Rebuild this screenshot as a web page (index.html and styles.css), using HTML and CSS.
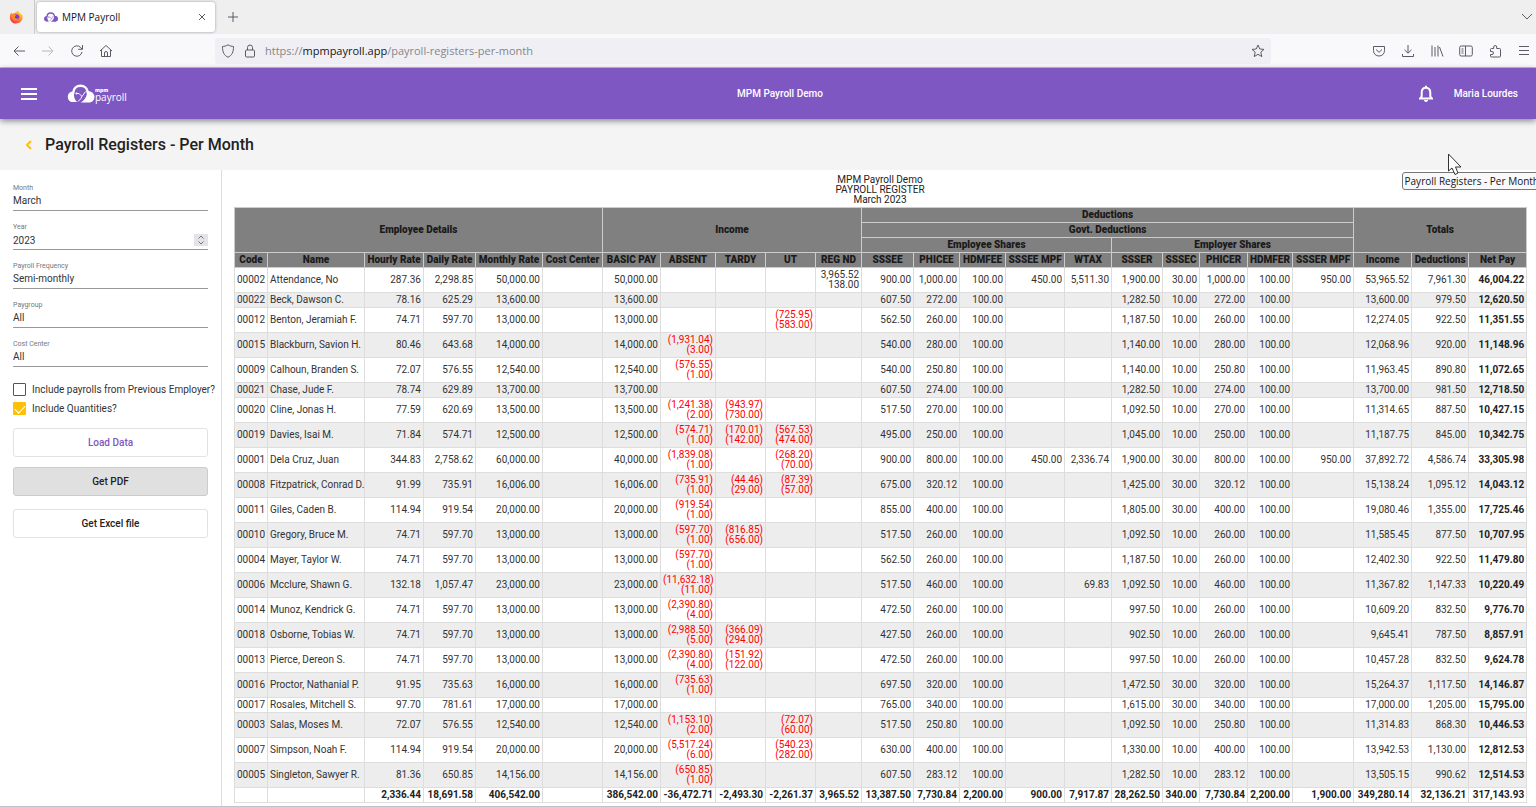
FILE: index.html
```html
<!DOCTYPE html>
<html lang="en">
<head>
<meta charset="utf-8">
<title>MPM Payroll</title>
<link rel="stylesheet" href="styles.css">
</head>
<body>
<svg class="defs" width="0" height="0" aria-hidden="true">
  <symbol id="cloud" viewBox="0 0 54 38">
    <path d="M12 33C6 33 3 30 3 25.500C3 20.500 7 17.500 11.500 17.500C12 9 18 3.500 26 3.500C34 3.500 39.500 9 40.500 16.500C47 16.500 51.500 21 51.500 26C51.500 31 47.500 34 42.500 34" fill="none" stroke="currentColor" stroke-width="5"/>
    <path d="M39 15C49 16 53 21 53 27C53 33 48 37 42 37H26C34 33 39 26 39 15Z" fill="currentColor"/>
    <path d="M2 27C2 20 8 16 13 18C12 24 14 31 19 36H10C5 36 2 32 2 27Z" fill="currentColor"/>
    <path d="M18 19H23L29 25L36 15M28 25L27 29L21 35" fill="none" stroke="currentColor" stroke-width="2"/>
    <circle cx="18" cy="19" r="2" fill="currentColor"/>
  </symbol>
</svg>

<header class="browser">
  <div class="tabs">
    <div class="firefox">
      <svg width="14" height="14" viewBox="0 0 28 28">
        <defs>
          <linearGradient id="flame" x1="0.8" y1="0" x2="0.2" y2="1"><stop offset="0" stop-color="#ffe14a"/><stop offset="0.45" stop-color="#ff9526"/><stop offset="1" stop-color="#f4275c"/></linearGradient>
        </defs>
        <path d="M3 8L5 5L7 8C9 6 11 5 13 5L18 1C19 4 23 6 24 9L26 8C30 19 23 27 14 27C5 27-1 18 3 8Z" fill="url(#flame)"/>
        <circle cx="14.500" cy="14.500" r="6" fill="#7a3bd0"/>
        <path d="M3 9C8 7 12 9 15 12C12 12 11 13 12 15C13 18 17 18 20 16C19 21 13 23 9 20C6 18 5 13 3 9Z" fill="#ff8a1f"/>
      </svg>
    </div>
    <div class="tab">
      <svg class="tab-icon" width="14" height="10"><use href="#cloud"/></svg>
      <span class="tab-title">MPM Payroll</span>
      <button class="chrome-btn" aria-label="Close tab"><svg width="8" height="8" viewBox="0 0 8 8"><path d="M1 1L7 7M7 1L1 7"/></svg></button>
    </div>
    <button class="chrome-btn new-tab" aria-label="New tab"><svg width="10" height="10" viewBox="0 0 10 10"><path d="M5 0V10M0 5H10"/></svg></button>
    <button class="chrome-btn list-tabs" aria-label="List all tabs"><svg width="12" height="8" viewBox="0 0 12 8"><path d="M1 1L6 6L11 1"/></svg></button>
  </div>
  <div class="toolbar">
    <nav class="nav-buttons" aria-label="History">
      <button class="chrome-btn" aria-label="Back"><svg width="14" height="14" viewBox="0 0 14 14"><path d="M13 7H2M6.500 2.500L2 7L6.500 11.500"/></svg></button>
      <button class="chrome-btn" aria-label="Forward" disabled><svg width="14" height="14" viewBox="0 0 14 14"><path d="M1 7H12M7.500 2.500L12 7L7.500 11.500"/></svg></button>
      <button class="chrome-btn" aria-label="Reload"><svg width="14" height="14" viewBox="0 0 14 14"><path d="M12 8A5.200 5.200 0 1 1 10.500 3.300L12 5M12.500 1V5.300H8.200"/></svg></button>
      <button class="chrome-btn" aria-label="Home"><svg width="14" height="14" viewBox="0 0 14 14"><path d="M1 7L7 1.500L13 7M2.500 6V12.500H11.500V6M5.500 12.500V9A1.500 1.500 0 0 1 8.500 9V12.500"/></svg></button>
    </nav>
    <div class="address">
      <svg width="14" height="14" viewBox="0 0 14 14"><path d="M7 .8C9 2 11 2.500 12.500 2.500C12.500 8 11 11.500 7 13.200C3 11.500 1.500 8 1.500 2.500C3 2.500 5 2 7 .8Z"/></svg>
      <svg width="14" height="14" viewBox="0 0 14 14"><rect x="2.500" y="6" width="9" height="7" rx="1"/><path d="M4.500 6V3.500A2.500 2.500 0 0 1 9.500 3.500V6"/></svg>
      <div class="url" role="textbox" aria-label="Address" contenteditable="true" spellcheck="false">https://<b>mpmpayroll.app</b>/payroll-registers-per-month</div>
      <button class="chrome-btn" aria-label="Bookmark"><svg width="14" height="14" viewBox="0 0 14 14"><path d="M7 1L8.800 5L13 5.400L9.800 8.200L10.800 12.600L7 10.300L3.200 12.600L4.200 8.200L1 5.400L5.200 5Z"/></svg></button>
    </div>
    <div class="tools">
      <button class="chrome-btn" aria-label="Pocket"><svg width="14" height="14" viewBox="0 0 14 14"><path d="M1.500 2.500H12.500V6.500C12.500 10 10 12 7 12S1.500 10 1.500 6.500ZM4 5.500L7 8.300L10 5.500"/></svg></button>
      <button class="chrome-btn" aria-label="Downloads"><svg width="14" height="14" viewBox="0 0 14 14"><path d="M7 1V9M3.500 5.800L7 9.200L10.500 5.800M1.500 10V12.500H12.500V10"/></svg></button>
      <button class="chrome-btn" aria-label="Library"><svg width="14" height="14" viewBox="0 0 14 14"><path d="M2 1.500V12.500M5 3V12.500M8 1.500V12.500M9.500 3L13 12.500"/></svg></button>
      <button class="chrome-btn" aria-label="Sidebars"><svg width="14" height="14" viewBox="0 0 14 14"><rect x=".7" y="2" width="12.600" height="10" rx="1.500"/><path d="M6.500 2V12M2.500 5H4.500M2.500 7H4.500M2.500 9H4.500"/></svg></button>
      <button class="chrome-btn" aria-label="Extensions"><svg width="14" height="14" viewBox="0 0 14 14"><path d="M2.500 7.500V5.500A1 1 0 0 1 3.500 4.500H5.700V3A1.500 1.500 0 0 1 8.700 3V4.500H11.500A1 1 0 0 1 12.500 5.500V12A1 1 0 0 1 11.500 13H3.500A1 1 0 0 1 2.500 12V10.500H4A1.500 1.500 0 0 0 4 7.500Z"/></svg></button>
      <button class="chrome-btn" aria-label="Menu"><svg width="14" height="14" viewBox="0 0 14 14"><path d="M2 2.500H12M2 6.500H12M2 10.500H12"/></svg></button>
    </div>
  </div>
</header>

<div class="appbar">
  <button class="menu-btn" aria-label="Open menu"><svg width="16" height="12" viewBox="0 0 16 12"><path d="M0 1H16M0 6H16M0 11H16"/></svg></button>
  <a class="logo" href="#" aria-label="MPM Payroll home">
    <svg width="62" height="22" viewBox="0 0 62 22">
      <use href="#cloud" x="0" y="1" width="28" height="19"/>
      <text class="logo-mpm" x="28" y="9">mpm</text>
      <text class="logo-name" x="28" y="18">payroll</text>
    </svg>
  </a>
  <span class="company">MPM Payroll Demo</span>
  <div class="account">
    <button class="bell" aria-label="Notifications"><svg width="14" height="18" viewBox="0 0 14 18"><path class="line" d="M1 13.500H13L11.300 11.500V7.500C11.300 4.500 9.500 2.800 7 2.800S2.700 4.500 2.700 7.500V11.500Z"/><path class="solid" d="M6 .8H8V3H6ZM5 15H9C9 17.500 5 17.500 5 15Z"/></svg></button>
    <a class="user" href="#">Maria Lourdes</a>
  </div>
</div>

<div class="titlebar">
  <a class="back" href="#" aria-label="Back"><svg width="8" height="10" viewBox="0 0 8 10"><path d="M6 1L2 5L6 9"/></svg></a>
  <h1>Payroll Registers - Per Month</h1>
  <div class="tooltip" role="tooltip">Payroll Registers - Per Month</div>
  <svg class="cursor" width="16" height="24" viewBox="0 0 16 24"><path d="M1.500 1V18L5 15L8 21.500L11 20L8.500 14H14Z"/></svg>
</div>

<div class="content">
  <form class="filters">
    <div class="field"><label for="month">Month</label><select id="month"><option>March</option></select></div>
    <div class="field"><label for="year">Year</label>
      <div class="number"><input id="year" type="number" value="2023"><span class="spin"><svg width="8" height="10" viewBox="0 0 8 10"><path d="M1.500 3.500L4 1L6.500 3.500M1.500 6.500L4 9L6.500 6.500"/></svg></span></div>
    </div>
    <div class="field"><label for="freq">Payroll Frequency</label><select id="freq"><option>Semi-monthly</option></select></div>
    <div class="field"><label for="group">Paygroup</label><select id="group"><option>All</option></select></div>
    <div class="field"><label for="center">Cost Center</label><select id="center"><option>All</option></select></div>
    <div class="checks">
      <label><input type="checkbox">Include payrolls from Previous Employer?</label>
      <label><input type="checkbox" checked>Include Quantities?</label>
    </div>
    <div class="actions">
      <button type="button" class="primary">Load Data</button>
      <button type="button" class="active">Get PDF</button>
      <button type="button" class="excel">Get Excel file</button>
    </div>
  </form>
  <main class="report">
    <div class="heading">MPM Payroll Demo<br>PAYROLL REGISTER<br>March 2023</div>
    <table>
      <colgroup id="cols"></colgroup>
      <thead>
        <tr><th colspan="6" rowspan="3">Employee Details</th><th colspan="5" rowspan="3">Income</th><th colspan="10">Deductions</th><th colspan="3" rowspan="3">Totals</th></tr>
        <tr><th colspan="10">Govt. Deductions</th></tr>
        <tr><th colspan="5">Employee Shares</th><th colspan="5">Employer Shares</th></tr>
        <tr id="names"></tr>
      </thead>
      <tbody id="rows"></tbody>
      <tfoot><tr id="totals"></tr></tfoot>
    </table>
  </main>
</div>
<script src="register.js"></script>
</body>
</html>
```

FILE: styles.css
```css
* { box-sizing: border-box; }

body {
  margin: 0;
  min-height: 100vh;
  display: flex;
  flex-direction: column;
  overflow: hidden;
  background: #fff;
  color: #333;
  font: 10px/10px Roboto, sans-serif;
}

button, input, select { font: inherit; color: inherit; }
button { padding: 0; border: 0; background: none; }
a { color: inherit; text-decoration: none; }
svg { display: block; flex: none; }
.defs { position: absolute; }

/* Browser window */
.browser {
  border-bottom: 1px solid #c3c0cb;
  background: #f9f9fb;
  font-family: "Open Sans", sans-serif;
}
.browser svg { fill: none; stroke: #5b5b66; stroke-width: 1; }
.browser .firefox svg, .browser .tab-icon { stroke: none; }
.tabs {
  display: flex;
  align-items: center;
  height: 34px;
  padding-right: 3px;
  background: #efefef;
}
.firefox {
  display: flex;
  align-items: center;
  height: 34px;
  width: 35px;
  padding-left: 9px;
  border-right: 1px solid #ccc;
}
.tab {
  display: flex;
  align-items: center;
  width: 178px;
  height: 30px;
  margin: 0 13px 0 2px;
  padding: 0 9px 0 7px;
  border-radius: 3px;
  background: #fff;
  box-shadow: 0 0 3px #999;
}
.tab-icon { color: #7e57c2; }
.tab-title { flex: 1; margin-left: 4px; color: #15141a; }
.list-tabs { margin-left: auto; }
.chrome-btn { display: grid; place-items: center; }
.chrome-btn:disabled { opacity: .4; }
.toolbar { display: flex; align-items: center; height: 33px; padding-right: 5px; }
.nav-buttons { display: flex; gap: 15px; padding-left: 12px; width: 215px; }
.address {
  flex: 1;
  display: flex;
  align-items: center;
  gap: 8px;
  height: 26px;
  padding: 0 6px;
  border-radius: 3px;
  background: #f0f0f4;
}
.url { flex: 1; color: #85858e; font-size: 11px; line-height: 16px; }
.url b { color: #15141a; font-weight: 400; }
.tools { display: flex; gap: 15px; margin-left: 101px; }

/* Application bar */
.appbar {
  position: relative;
  z-index: 1;
  display: grid;
  grid-template-columns: 1fr auto 1fr;
  grid-template-areas: "left mid right";
  align-items: center;
  height: 51px;
  padding: 0 0 0 24px;
  background: #7e57c2;
  box-shadow: 0 2px 6px rgba(0, 0, 0, .45);
  color: #fff;
  font-weight: 500;
}
.menu-btn { grid-area: left; justify-self: start; margin-left: -3px; }
.menu-btn path { stroke: #fff; stroke-width: 2; }
.logo { grid-area: left; justify-self: start; margin-left: 43px; }
.logo text { fill: #fff; font-family: "Open Sans", sans-serif; }
.logo-mpm { font-size: 5px; font-weight: 800; }
.logo-name { font-size: 10px; font-weight: 400; }
.company { grid-area: mid; }
.account { grid-area: right; justify-self: end; display: flex; align-items: center; gap: 21px; padding-right: 18px; }
.bell .line { fill: none; stroke: #fff; stroke-width: 2; }
.bell .solid { fill: #fff; }

/* Page title */
.titlebar {
  position: relative;
  display: flex;
  align-items: center;
  gap: 12px;
  height: 51px;
  padding-left: 25px;
  background: #f4f4f4;
}
.back path { fill: none; stroke: #ffc107; stroke-width: 2; }
h1 { margin: 0; color: #222; font-size: 16px; line-height: 20px; font-weight: 500; }
.tooltip {
  position: absolute;
  z-index: 2;
  top: 53px;
  right: -6px;
  padding: 0 2px;
  border: 1px solid #777;
  border-radius: 3px;
  background: #f9f9fb;
  color: #15141a;
  font: 10px/16px "Open Sans", sans-serif;
  white-space: nowrap;
}
.cursor { position: absolute; z-index: 3; top: 34px; right: 73px; fill: #fff; stroke: #333; }

/* Filters */
.content { flex: 1; display: flex; border-bottom: 1px solid #c3c0cb; }
.filters {
  flex: none;
  width: 222px;
  padding: 2px 13px 0;
  border-right: 1px solid #ddd;
}
.field {
  display: flex;
  flex-direction: column;
  justify-content: flex-end;
  height: 39px;
  border-bottom: 1px solid #999;
}
.field label { color: #777; font-size: 7px; line-height: 8px; }
.field select, .field input {
  appearance: none;
  width: 100%;
  height: 18px;
  padding: 0;
  border: 0;
  background: none;
}
.number { display: flex; align-items: center; }
.number input { appearance: textfield; }
.number input::-webkit-inner-spin-button { appearance: none; }
.spin { padding: 1px 3px; background: #e4e3ea; }
.spin path { fill: none; stroke: #777; }
.checks { display: grid; gap: 6px; padding-top: 16px; }
.checks label { display: flex; align-items: center; gap: 6px; white-space: nowrap; line-height: 13px; }
.checks input {
  appearance: none;
  flex: none;
  width: 13px;
  height: 13px;
  margin: 0;
  border: 1px solid #555;
  border-radius: 1px;
}
.checks input:checked { border: 0; background: #ffc107; }
.checks input:checked::after {
  content: "";
  display: block;
  width: 9px;
  height: 5px;
  margin: 3px 2px;
  border: solid #fff;
  border-width: 0 0 1px 1px;
  transform: rotate(-45deg);
}
.actions { display: grid; gap: 10px; padding-top: 13px; }
.actions button {
  height: 29px;
  border: 1px solid #e2e2e2;
  border-radius: 3px;
  color: #222;
  font-weight: 500;
}
.actions .primary { color: #7e57c2; }
.actions .active { border-color: #ccc; background: #e0e0e0; }
.actions .excel { margin-top: 3px; }

/* Register */
.report { flex: 1; min-width: 0; padding: 5px 10px 3px 12px; }
.heading { margin-bottom: 2px; color: #222; text-align: center; }
table { width: 100%; table-layout: fixed; border-collapse: collapse; }
th, td { padding: 2px; border: 1px solid #ddd; white-space: nowrap; }
th { border-color: #ccc; background: #808080; color: #1a1a1a; font-weight: 900; padding-inline: 0; }
td { text-align: right; }
td:nth-child(-n+2) { text-align: left; }
tbody tr:nth-child(even) { background: #ededed; }
tbody td:last-child, tfoot td { color: #222; font-weight: 700; }
.minus { color: #f00; }
```

FILE: register.js
```js
const columns = [
  ['Code', 33], ['Name', 97], ['Hourly Rate', 59], ['Daily Rate', 52], ['Monthly Rate', 67], ['Cost Center', 60],
  ['BASIC PAY', 58], ['ABSENT', 55], ['TARDY', 50], ['UT', 50], ['REG ND', 46],
  ['SSSEE', 52], ['PHICEE', 46], ['HDMFEE', 46], ['SSSEE MPF', 59], ['WTAX', 47],
  ['SSSER', 51], ['SSSEC', 37], ['PHICER', 48], ['HDMFER', 45], ['SSSER MPF', 61],
  ['Income', 58], ['Deductions', 57], ['Net Pay', 58]
];

// A slash separates an amount from its quantity.
const employees = `
00002|Attendance, No|287.36|2,298.85|50,000.00||50,000.00||||3,965.52/138.00|900.00|1,000.00|100.00|450.00|5,511.30|1,900.00|30.00|1,000.00|100.00|950.00|53,965.52|7,961.30|46,004.22
00022|Beck, Dawson C.|78.16|625.29|13,600.00||13,600.00|||||607.50|272.00|100.00|||1,282.50|10.00|272.00|100.00||13,600.00|979.50|12,620.50
00012|Benton, Jeramiah F.|74.71|597.70|13,000.00||13,000.00|||(725.95)/(583.00)||562.50|260.00|100.00|||1,187.50|10.00|260.00|100.00||12,274.05|922.50|11,351.55
00015|Blackburn, Savion H.|80.46|643.68|14,000.00||14,000.00|(1,931.04)/(3.00)||||540.00|280.00|100.00|||1,140.00|10.00|280.00|100.00||12,068.96|920.00|11,148.96
00009|Calhoun, Branden S.|72.07|576.55|12,540.00||12,540.00|(576.55)/(1.00)||||540.00|250.80|100.00|||1,140.00|10.00|250.80|100.00||11,963.45|890.80|11,072.65
00021|Chase, Jude F.|78.74|629.89|13,700.00||13,700.00|||||607.50|274.00|100.00|||1,282.50|10.00|274.00|100.00||13,700.00|981.50|12,718.50
00020|Cline, Jonas H.|77.59|620.69|13,500.00||13,500.00|(1,241.38)/(2.00)|(943.97)/(730.00)|||517.50|270.00|100.00|||1,092.50|10.00|270.00|100.00||11,314.65|887.50|10,427.15
00019|Davies, Isai M.|71.84|574.71|12,500.00||12,500.00|(574.71)/(1.00)|(170.01)/(142.00)|(567.53)/(474.00)||495.00|250.00|100.00|||1,045.00|10.00|250.00|100.00||11,187.75|845.00|10,342.75
00001|Dela Cruz, Juan|344.83|2,758.62|60,000.00||40,000.00|(1,839.08)/(1.00)||(268.20)/(70.00)||900.00|800.00|100.00|450.00|2,336.74|1,900.00|30.00|800.00|100.00|950.00|37,892.72|4,586.74|33,305.98
00008|Fitzpatrick, Conrad D.|91.99|735.91|16,006.00||16,006.00|(735.91)/(1.00)|(44.46)/(29.00)|(87.39)/(57.00)||675.00|320.12|100.00|||1,425.00|30.00|320.12|100.00||15,138.24|1,095.12|14,043.12
00011|Giles, Caden B.|114.94|919.54|20,000.00||20,000.00|(919.54)/(1.00)||||855.00|400.00|100.00|||1,805.00|30.00|400.00|100.00||19,080.46|1,355.00|17,725.46
00010|Gregory, Bruce M.|74.71|597.70|13,000.00||13,000.00|(597.70)/(1.00)|(816.85)/(656.00)|||517.50|260.00|100.00|||1,092.50|10.00|260.00|100.00||11,585.45|877.50|10,707.95
00004|Mayer, Taylor W.|74.71|597.70|13,000.00||13,000.00|(597.70)/(1.00)||||562.50|260.00|100.00|||1,187.50|10.00|260.00|100.00||12,402.30|922.50|11,479.80
00006|Mcclure, Shawn G.|132.18|1,057.47|23,000.00||23,000.00|(11,632.18)/(11.00)||||517.50|460.00|100.00||69.83|1,092.50|10.00|460.00|100.00||11,367.82|1,147.33|10,220.49
00014|Munoz, Kendrick G.|74.71|597.70|13,000.00||13,000.00|(2,390.80)/(4.00)||||472.50|260.00|100.00|||997.50|10.00|260.00|100.00||10,609.20|832.50|9,776.70
00018|Osborne, Tobias W.|74.71|597.70|13,000.00||13,000.00|(2,988.50)/(5.00)|(366.09)/(294.00)|||427.50|260.00|100.00|||902.50|10.00|260.00|100.00||9,645.41|787.50|8,857.91
00013|Pierce, Dereon S.|74.71|597.70|13,000.00||13,000.00|(2,390.80)/(4.00)|(151.92)/(122.00)|||472.50|260.00|100.00|||997.50|10.00|260.00|100.00||10,457.28|832.50|9,624.78
00016|Proctor, Nathanial P.|91.95|735.63|16,000.00||16,000.00|(735.63)/(1.00)||||697.50|320.00|100.00|||1,472.50|30.00|320.00|100.00||15,264.37|1,117.50|14,146.87
00017|Rosales, Mitchell S.|97.70|781.61|17,000.00||17,000.00|||||765.00|340.00|100.00|||1,615.00|30.00|340.00|100.00||17,000.00|1,205.00|15,795.00
00003|Salas, Moses M.|72.07|576.55|12,540.00||12,540.00|(1,153.10)/(2.00)||(72.07)/(60.00)||517.50|250.80|100.00|||1,092.50|10.00|250.80|100.00||11,314.83|868.30|10,446.53
00007|Simpson, Noah F.|114.94|919.54|20,000.00||20,000.00|(5,517.24)/(6.00)||(540.23)/(282.00)||630.00|400.00|100.00|||1,330.00|10.00|400.00|100.00||13,942.53|1,130.00|12,812.53
00005|Singleton, Sawyer R.|81.36|650.85|14,156.00||14,156.00|(650.85)/(1.00)||||607.50|283.12|100.00|||1,282.50|10.00|283.12|100.00||13,505.15|990.62|12,514.53`;

const totals = '||2,336.44|18,691.58|406,542.00||386,542.00|-36,472.71|-2,493.30|-2,261.37|3,965.52|13,387.50|7,730.84|2,200.00|900.00|7,917.87|28,262.50|340.00|7,730.84|2,200.00|1,900.00|349,280.14|32,136.21|317,143.93';

const cell = text =>
  `<td${text.startsWith('(') ? ' class="minus"' : ''}>${text.replace('/', '<br>')}</td>`;
const cells = line => line.split('|').map(cell).join('');
const fill = (id, html) => { document.getElementById(id).innerHTML = html; };

fill('cols', columns.map(([, width]) => `<col style="width:${width}px">`).join(''));
fill('names', columns.map(([name]) => `<th>${name}</th>`).join(''));
fill('rows', employees.trim().split('\n').map(line => `<tr>${cells(line)}</tr>`).join(''));
fill('totals', cells(totals));
```
